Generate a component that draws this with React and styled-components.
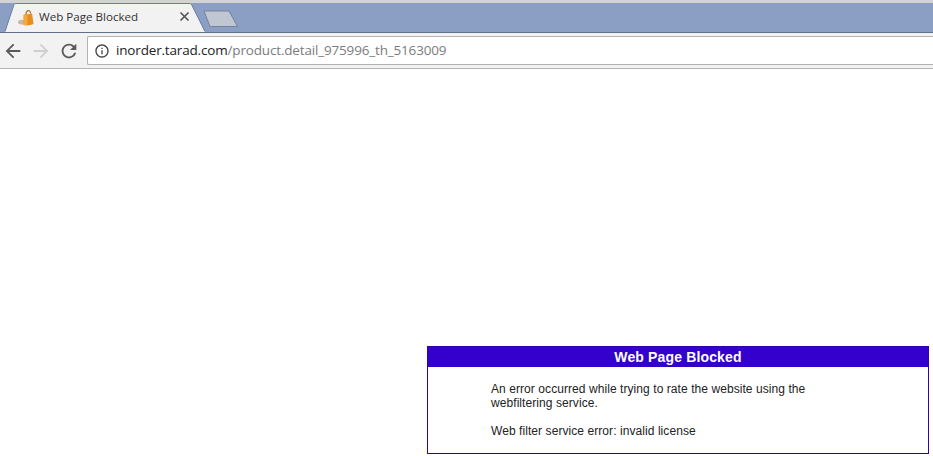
import styled, { createGlobalStyle } from 'styled-components'

const GlobalStyle = createGlobalStyle`
  html, body {
    margin: 0;
    padding: 0;
    background: #fff;
  }
`

const Page = styled.div`
  width: 933px;
  height: 456px;
  overflow: hidden;
  display: flex;
  flex-direction: column;
`

const TabStrip = styled.div`
  height: 29px;
  flex: none;
  display: flex;
  background: #8a9fc3;
  border-top: 3px solid #d2d2d4;
  border-bottom: 1px solid #5f7088;
`

const Tab = styled.div`
  position: relative;
  margin-left: 5px;
  width: 200px;
  height: 29px;
  margin-bottom: -1px;
  flex: none;
  display: flex;
  align-items: center;
  padding: 0 15px 2px 13px;
  box-sizing: border-box;
`

const TabShape = styled.svg`
  position: absolute;
  left: 0;
  top: 0;
`

const Favicon = styled.svg`
  position: relative;
  flex: none;
  width: 16px;
  height: 17px;
  margin-top: 1px;
`

const TabTitle = styled.span`
  position: relative;
  flex: 1;
  margin-left: 5px;
  font: 11.6px 'Open Sans', 'Noto Sans', sans-serif;
  color: #333;
  white-space: nowrap;
`

const NewTab = styled.svg`
  flex: none;
  margin: 7px 0 0 -2px;
`

const Toolbar = styled.div`
  height: 36px;
  flex: none;
  display: flex;
  align-items: center;
  padding: 0 0 0 2px;
  box-sizing: border-box;
  background: #f2f2f2;
  border-bottom: 1px solid #b4b4b4;
`

const NavIcon = styled.svg`
  flex: none;
  width: 22px;
  height: 22px;
  margin-right: 6px;
  fill: ${props => props.$color};
`

const AddressBar = styled.div`
  flex: 1;
  height: 29px;
  margin-left: 1px;
  box-sizing: border-box;
  display: flex;
  align-items: center;
  gap: 6px;
  padding-left: 6px;
  background: #fff;
  border: 1px solid #b5b1b1;
  border-right: 0;
  border-radius: 2px 0 0 2px;
`

const InfoIcon = styled.svg`
  flex: none;
  width: 16px;
  height: 16px;
  fill: #444;
`

const Url = styled.span`
  font: 13.5px 'Open Sans', 'Noto Sans', sans-serif;
  letter-spacing: -0.17px;
  color: #7c7c7c;
  white-space: nowrap;
  margin-top: -2px;
`

const Host = styled.span`
  color: #222;
`

const Content = styled.main`
  flex: 1;
  padding: 277px 0 0 427px;
`

const BlockBox = styled.section`
  width: 502px;
  height: 108px;
  box-sizing: border-box;
  border: 1px solid #3300aa;
  font-family: 'Liberation Sans', Arial, sans-serif;
`

const BlockTitle = styled.h1`
  margin: 0;
  height: 20px;
  background: #3300cc;
  color: #fff;
  font-size: 14px;
  line-height: 20px;
  font-weight: bold;
  letter-spacing: 0.15px;
  text-align: center;
`

const BlockBody = styled.div`
  padding: 15px 100px 0 63px;
  font-size: 12px;
  line-height: 14px;
  letter-spacing: 0.07px;
  color: #222;
`

const Paragraph = styled.p`
  margin: 0 0 14px;
`

const App = () => {
  return (
    <Page>
      <GlobalStyle />
      <TabStrip>
        <Tab>
          <TabShape width="200" height="29" viewBox="0 0 200 29">
            <path d="M0 29 L9 1.5 Q9.5 0 11 0 L184 0 Q186 0 186.500 1.500 L200 29 Z" fill="#f2f2f2" />
            <path d="M0 28.500 L9 1.500 Q9.500 .5 11 .5 L184 .5 Q186 .5 186.500 1.500 L200 28.500" fill="none" stroke="#6d7f9b" />
          </TabShape>
          <Favicon viewBox="0 0 17 18">
            <ellipse cx="5" cy="14" rx="5" ry="2.500" fill="#c9b8a2" />
            <path d="M6 6 L15 5 L16.500 16 Q12 18 6 17 Z" fill="#e98d1e" />
            <path d="M6 6 L10 5.500 L10 17.500 L6 17 Z" fill="#f4a93c" />
            <path d="M8.500 6 C8.500 1 13 0 13.500 5" fill="none" stroke="#b9701a" strokeWidth="1.200" />
          </Favicon>
          <TabTitle>Web Page Blocked</TabTitle>
          <svg width="11" height="11" viewBox="0 0 11 11" style={{ position: 'relative' }}>
            <path d="M1.500 1.500 L9.500 9.500 M9.500 1.500 L1.500 9.500" stroke="#555" strokeWidth="1.700" />
          </svg>
        </Tab>
        <NewTab width="36" height="18" viewBox="0 0 36 18">
          <path d="M1 1 L26 1 L34.500 16.500 L7 16.500 Z" fill="#c0c7d2" stroke="#72829c" strokeLinejoin="round" />
        </NewTab>
      </TabStrip>
      <Toolbar>
        <NavIcon $color="#5a5a5a" viewBox="0 0 24 24">
          <path d="M20 11H7.830l5.590-5.590L12 4l-8 8 8 8 1.410-1.410L7.830 13H20v-2z" />
        </NavIcon>
        <NavIcon $color="#cfcfcf" viewBox="0 0 24 24">
          <path d="M4 11h12.170l-5.590-5.590L12 4l8 8-8 8-1.410-1.410L16.170 13H4v-2z" />
        </NavIcon>
        <NavIcon $color="#5a5a5a" viewBox="0 0 24 24">
          <path d="M17.650 6.350C16.200 4.900 14.210 4 12 4c-4.420 0-7.990 3.580-7.990 8s3.570 8 7.990 8c3.730 0 6.840-2.550 7.730-6h-2.080c-.82 2.330-3.040 4-5.650 4-3.310 0-6-2.690-6-6s2.690-6 6-6c1.660 0 3.140.69 4.220 1.780L13 11h7V4l-2.350 2.350z" />
        </NavIcon>
        <AddressBar>
          <InfoIcon viewBox="0 0 24 24">
            <path d="M11 7h2v2h-2zm0 4h2v6h-2zm1-9C6.480 2 2 6.480 2 12s4.480 10 10 10 10-4.480 10-10S17.520 2 12 2zm0 18c-4.410 0-8-3.590-8-8s3.590-8 8-8 8 3.590 8 8-3.590 8-8 8z" />
          </InfoIcon>
          <Url>
            <Host>inorder.tarad.com</Host>/product.detail_975996_th_5163009
          </Url>
        </AddressBar>
      </Toolbar>
      <Content>
        <BlockBox>
          <BlockTitle>Web Page Blocked</BlockTitle>
          <BlockBody>
            <Paragraph>
              An error occurred while trying to rate the website using the webfiltering service.
            </Paragraph>
            <Paragraph>Web filter service error: invalid license</Paragraph>
          </BlockBody>
        </BlockBox>
      </Content>
    </Page>
  )
}

export default App
